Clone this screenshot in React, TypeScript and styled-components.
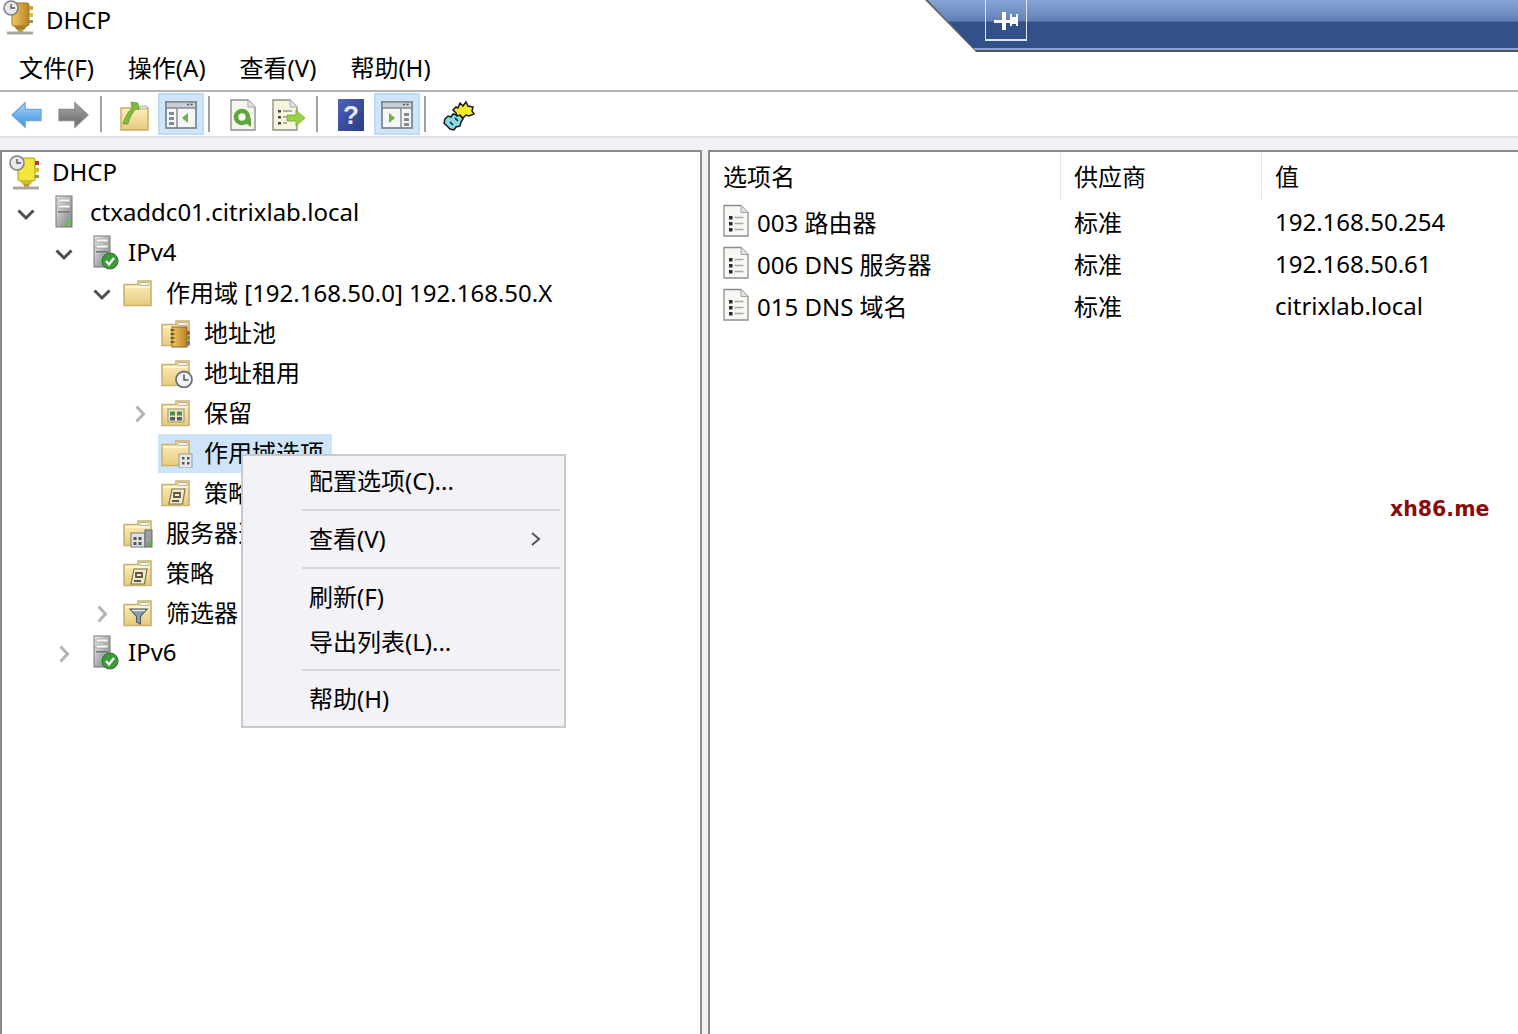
import React from 'react';
import styled, { createGlobalStyle } from 'styled-components';

const GlobalStyle = createGlobalStyle`
  html, body { margin: 0; padding: 0; background: #fff; }
  body {
    font-family: "Noto Sans", "Noto Sans CJK SC", sans-serif;
    font-size: 24px;
    color: #000;
    overflow: hidden;
  }
`;

/* ---------- icons ---------- */

const SharedDefs = () => (
  <svg width="0" height="0" style={{ position: 'absolute' }}>
    <defs>
      <linearGradient id="folderFill" x1="0" y1="0" x2="0" y2="1">
        <stop offset="0" stopColor="#fcf0bd" />
        <stop offset="1" stopColor="#e6cb80" />
      </linearGradient>
      <linearGradient id="goldFill" x1="0" y1="0" x2="1" y2="0">
        <stop offset="0" stopColor="#f0c860" />
        <stop offset="1" stopColor="#b98422" />
      </linearGradient>
      <linearGradient id="serverFill" x1="0" y1="0" x2="1" y2="1">
        <stop offset="0" stopColor="#f0f0f0" />
        <stop offset="1" stopColor="#777c80" />
      </linearGradient>
      <linearGradient id="arrowBlue" x1="0" y1="0" x2="0" y2="1">
        <stop offset="0" stopColor="#a8d4f8" />
        <stop offset="1" stopColor="#3c8edc" />
      </linearGradient>
      <linearGradient id="arrowGrey" x1="0" y1="0" x2="0" y2="1">
        <stop offset="0" stopColor="#a8a8a8" />
        <stop offset="1" stopColor="#666" />
      </linearGradient>
      <linearGradient id="helpFill" x1="0" y1="0" x2="1" y2="1">
        <stop offset="0" stopColor="#4b62bd" />
        <stop offset="1" stopColor="#2c3c80" />
      </linearGradient>
    </defs>
  </svg>
);

const Folder = ({ children }: { children?: React.ReactNode }) => (
  <svg width="32" height="30" viewBox="0 0 32 30">
    <path d="M1 27.500V6.500h14V3h13v24.500z" fill="url(#folderFill)" stroke="#cdb06c" strokeWidth="1.600" />
    <path d="M17 4.500h9v3h-9z" fill="#eef0ea" stroke="#b0ac92" strokeWidth=".8" />
    <path d="M2 9h25" stroke="#fff9dc" strokeWidth="1.600" />
    {children}
  </svg>
);

const BookBadge = () => (
  <g>
    <rect x="11" y="9" width="15" height="20" fill="url(#goldFill)" stroke="#8e6420" />
    <path d="M9.500 12h4M9.500 16h4M9.500 20h4M9.500 24h4" stroke="#5e4a22" strokeWidth="1.400" />
    <path d="M27.500 13v4" stroke="#a8433f" strokeWidth="2.400" />
    <path d="M27.500 18v4" stroke="#5a9a3a" strokeWidth="2.400" />
    <path d="M27.500 23v4" stroke="#3f77b8" strokeWidth="2.400" />
  </g>
);

const ClockBadge = () => (
  <g>
    <circle cx="23" cy="21.500" r="8" fill="#eef1f5" stroke="#6d7278" strokeWidth="1.800" />
    <path d="M23 16.500V22h4.500" fill="none" stroke="#555" strokeWidth="1.500" />
  </g>
);

const GridBadge = () => (
  <g>
    <rect x="7" y="11" width="16" height="13" fill="#e9e3c4" stroke="#9a9678" />
    <path d="M9 13.500h5v4H9zM16 13.500h5v4h-5z" fill="#4f8a4a" />
    <path d="M9 19h5v3.500H9zM16 19h5v3.500h-5z" fill="#5c5c5c" />
  </g>
);

const SheetBadge = () => (
  <g>
    <rect x="18" y="16" width="13" height="14" fill="#e8e8ec" stroke="#95979b" />
    <path d="M21 19h2.500v2.500H21zM26 19h2.500v2.500H26zM21 24h2.500v2.500H21zM26 24h2.500v2.500H26z" fill="#555" />
  </g>
);

const PolicyBadge = () => (
  <g>
    <path d="M11 11h13l-2.500 15H8z" fill="#f4ebc6" stroke="#7c7358" strokeWidth="1.200" />
    <path d="M13 15h6v4h-6zM11 23h7" fill="none" stroke="#5a5a4c" strokeWidth="1.800" />
  </g>
);

const FilterBadge = () => (
  <g>
    <path d="M7 11h17l-6.500 7.500V26l-4-2v-5.500z" fill="#8aa0a8" stroke="#4d5a60" strokeWidth="1.100" />
    <path d="M9 12.500h13" stroke="#e4eef0" strokeWidth="1.400" />
  </g>
);

const ServerBadge = () => (
  <g>
    <rect x="8" y="15" width="14" height="14" fill="#dfe0e2" stroke="#777" />
    <path d="M10.500 19h3v3h-3zM15.500 19h3v3h-3zM10.500 24h3v3h-3zM15.500 24h3v3h-3z" fill="#555" />
    <rect x="22" y="12" width="7" height="17" fill="#9aa0a4" stroke="#666" />
    <rect x="24" y="24" width="4" height="4" fill="#67b04a" />
  </g>
);

const ServerFrame = styled.div`
  margin-left: 8px;
  display: flex;
`;

const Server = ({ check }: { check?: boolean }) => (
  <ServerFrame>
    <svg width="26" height="36" viewBox="0 0 26 36">
      <rect x="1" y="1" width="16" height="31" fill="url(#serverFill)" stroke="#777" strokeWidth="1" />
      <rect x="3" y="4" width="12" height="3" fill="#f5f5f5" stroke="#8a8a8a" strokeWidth=".6" />
      <rect x="3" y="10" width="12" height="3" fill="#f5f5f5" stroke="#8a8a8a" strokeWidth=".6" />
      <rect x="3" y="16" width="12" height="1.600" fill="#777" />
      {check ? (
        <g>
          <circle cx="17" cy="26" r="8" fill="#3f9a3c" stroke="#2d6c2c" />
          <path d="M13 26l3 3.500 5-6.500" fill="none" stroke="#fff" strokeWidth="2.200" />
        </g>
      ) : (
        <rect x="10" y="25" width="6" height="6" fill="#79b565" />
      )}
    </svg>
  </ServerFrame>
);

const DhcpIcon = ({ bright }: { bright?: boolean }) => (
  <svg width="32" height="36" viewBox="0 0 32 36">
    <rect x="9" y="3" width="17" height="23" rx="2" fill={bright ? '#f2e63a' : 'url(#goldFill)'} stroke={bright ? '#a89a1c' : '#9a7424'} />
    <path d="M11 26h13l-3 4h-7z" fill={bright ? '#c8bc30' : '#a87e2a'} />
    <rect x="15" y="29" width="5" height="3" fill="#c09a3a" />
    <rect x="4" y="31.500" width="26" height="3" fill="#aaa79a" />
    <circle cx="8" cy="8" r="7" fill="#e7e9ec" stroke="#808488" strokeWidth="1.600" />
    <path d="M8 4v4h4" fill="none" stroke="#555" strokeWidth="1.300" />
    <rect x="26" y="6" width="4" height="4" fill={bright ? '#c8332f' : '#c9a24a'} />
    <rect x="26" y="13" width="4" height="4" fill="#d9b92f" />
    <rect x="26" y="20" width="4" height="3" fill="#7f9a5a" />
  </svg>
);

const DocList = () => (
  <svg width="28" height="34" viewBox="0 0 28 34">
    <path d="M2 1.500h17l7 7V32H2z" fill="#f7f7f3" stroke="#8d8d8d" strokeWidth="1.300" />
    <path d="M19 1.500v7h7" fill="#e3e3e3" stroke="#a0a0a0" />
    <path d="M7 12h3.500v3.500H7zM7 18h3.500v3.500H7zM7 24h3.500v3.500H7z" fill="#2c2c2c" />
    <path d="M12.500 13.500h9M12.500 19.500h9M12.500 25.500h9" stroke="#a7a7a7" strokeWidth="1.600" />
  </svg>
);

const Chevron = ({ open }: { open?: boolean }) => (
  <svg width="20" height="20" viewBox="0 0 20 20">
    {open ? (
      <path d="M2.500 6.500l7.500 7.500 7.500-7.500" fill="none" stroke="#4e4e4e" strokeWidth="3" />
    ) : (
      <path d="M6.500 2.500l7 7.500-7 7.500" fill="none" stroke="#b4b4b4" strokeWidth="3" />
    )}
  </svg>
);

const ArrowLeft = () => (
  <svg width="32" height="28" viewBox="0 0 34 30">
    <path d="M1 15L15 2v7h17v12H15v7z" fill="url(#arrowBlue)" stroke="#6ba6de" strokeWidth="1.400" />
  </svg>
);

const ArrowRight = () => (
  <svg width="32" height="28" viewBox="0 0 34 30">
    <path d="M33 15L19 2v7H2v12h17v7z" fill="url(#arrowGrey)" stroke="#8c8c8c" strokeWidth="1.400" />
  </svg>
);

const UpFolder = () => (
  <svg width="30" height="32" viewBox="0 0 30 32">
    <path d="M1 31V9h27v22z" fill="url(#folderFill)" stroke="#c9aa62" strokeWidth="1.400" />
    <path d="M20 7h7v3h-7z" fill="#e2e3d8" stroke="#a0a090" strokeWidth=".7" />
    <path d="M3 25C5 17 9 12 12 9l-1-6 7 1 1 7-3-1c-3 3-7 9-8 15z" fill="#80b83a" stroke="#6a9c30" strokeWidth=".8" />
  </svg>
);

const PaneIcon = ({ flip }: { flip?: boolean }) => (
  <svg width="32" height="28" viewBox="0 0 32 28">
    <rect x="1" y="1" width="30" height="26" fill="#f4f6f8" stroke="#7e8890" strokeWidth="1.800" />
    <rect x="1" y="1" width="30" height="6" fill="#c7ced4" stroke="#7e8890" strokeWidth="1.400" />
    <path d="M22 3.500h2M25.500 3.500h2" stroke="#556" strokeWidth="1.400" />
    {flip ? (
      <g>
        <path d="M8 12l6 5-6 5z" fill="#6fb23c" />
        <path d="M20 7v20" stroke="#7e8890" strokeWidth="1.400" />
        <path d="M23 12h5v3h-5zM23 17h5v3h-5zM23 22h5v3h-5z" fill="#838b92" />
      </g>
    ) : (
      <g>
        <path d="M4 11h5v3H4zM4 16h5v3H4zM4 21h5v3H4z" fill="#838b92" />
        <path d="M12 7v20" stroke="#7e8890" strokeWidth="1.400" />
        <path d="M23 12l-6 5 6 5z" fill="#6fb23c" />
      </g>
    )}
  </svg>
);

const RefreshDoc = () => (
  <svg width="26" height="32" viewBox="0 0 26 32">
    <path d="M1 1h17l7 7v23H1z" fill="#f6f6f0" stroke="#8f8f8f" strokeWidth="1.400" />
    <path d="M18 1v7h7" fill="#e4e4e4" stroke="#aaa" />
    <circle cx="12" cy="18" r="6" fill="none" stroke="#5fa53c" strokeWidth="4.600" />
    <path d="M13 22l8 6v-9z" fill="#5fa53c" />
  </svg>
);

const ExportDoc = () => (
  <svg width="34" height="32" viewBox="0 0 34 32">
    <path d="M1 1h17l7 7v23H1z" fill="#f7f4e0" stroke="#8f8f8f" strokeWidth="1.400" />
    <path d="M18 1v7h7" fill="#e4e4e4" stroke="#aaa" />
    <path d="M6 11h3v2.500H6zM6 17h3v2.500H6zM6 23h3v2.500H6z" fill="#444" />
    <path d="M11 12h9M11 18h4M11 24h4" stroke="#999" strokeWidth="1.500" />
    <path d="M15 16h9v-5l9 8-9 8v-5h-9z" fill="#9ad04a" stroke="#76a83a" strokeWidth=".8" />
  </svg>
);

const HelpBook = () => (
  <svg width="26" height="32" viewBox="0 0 26 32">
    <rect width="26" height="32" fill="url(#helpFill)" />
    <text x="13" y="25" fontFamily="Liberation Sans, sans-serif" fontWeight="700" fontSize="26" fill="#e6e9f6" textAnchor="middle">?</text>
  </svg>
);

const SnapIn = () => (
  <svg width="34" height="32" viewBox="0 0 34 32">
    <path d="M3 20l3-3 3 1 2-3 3 1 2-2 3 3 2 3-2 3-1 4-4 1-2 3-4-1-3-3-3-3z" fill="#86dbe4" stroke="#1a1a1a" strokeWidth="1.500" />
    <path d="M11 11l3-3 2 1 2-5 3 3 3-4 2 4 5 1-1 4 2 3-5 2-3-1-3 3-3-3-3 1-1-3z" fill="#f6ea2e" stroke="#1a1a1a" strokeWidth="1.500" />
    <path d="M8 23l3 3M13 19l3 3" stroke="#1a1a1a" strokeWidth="1.500" />
  </svg>
);

const PinGlyph = () => (
  <svg width="24" height="18" viewBox="0 0 24 18">
    <path d="M0 8h16v3H0zM8 0h4v18H8z" fill="#fff" />
    <path d="M16 2h2v12h-2zM22 2h2v12h-2zM18 5h4v7h-4z" fill="#fff" />
  </svg>
);

/* ---------- page ---------- */

const Page = styled.div`
  position: relative;
  width: 1518px;
  height: 1034px;
  overflow: hidden;
  display: flex;
  flex-direction: column;
  background: #fff;
`;

const TitleBar = styled.div`
  height: 45px;
  flex: none;
  display: flex;
  align-items: flex-start;
`;

const AppIconBox = styled.div`
  width: 46px;
  height: 36px;
  flex: none;
  padding-left: 3px;
  box-sizing: border-box;
`;

const TitleText = styled.div`
  flex: 1;
  line-height: 40px;
`;

const Ribbon = styled.div`
  width: 593px;
  height: 52px;
  flex: none;
  box-sizing: border-box;
  padding-left: 60px;
  background: #666;
  clip-path: polygon(0 0, 100% 0, 100% 100%, 51px 100%);
  position: relative;
  z-index: 1;
  &::before {
    content: '';
    position: absolute;
    inset: 0 0 0 3px;
    background: linear-gradient(#8aa6d8 0, #5f7fb5 21px, #345089 22px, #345089 48px, #8aa6d8 48px, #8aa6d8 50px, #555 50px);
    clip-path: polygon(0 0, 100% 0, 100% 100%, 49px 100%);
  }
`;

const PinBox = styled.div`
  position: relative;
  width: 42px;
  height: 41px;
  box-sizing: border-box;
  border: solid #dfe6f2;
  border-width: 0 1px 2px 1px;
  display: flex;
  align-items: center;
  justify-content: center;
  padding-top: 3px;
`;

const MenuBar = styled.div`
  height: 47px;
  flex: none;
  box-sizing: border-box;
  display: flex;
  align-items: center;
  padding: 0 0 2px 19px;
  gap: 34px;
  border-bottom: 2px solid #b2b2b2;
`;

const Toolbar = styled.div`
  height: 44px;
  flex: none;
  display: flex;
  align-items: center;
  padding-left: 4px;
  border-bottom: 2px solid #e2e2e2;
`;

const ToolButton = styled.div<{ $active?: boolean }>`
  width: 46px;
  height: 42px;
  box-sizing: border-box;
  display: flex;
  align-items: center;
  justify-content: center;
  padding-top: 2px;
  background: ${(p) => (p.$active ? '#cfe5f9' : 'transparent')};
  border: 2px solid ${(p) => (p.$active ? '#bcdcf7' : 'transparent')};
`;

const ToolSep = styled.div`
  width: 2px;
  height: 36px;
  margin: 0 10px 0 4px;
  background: #a2a2a2;
`;

const Panes = styled.div`
  flex: 1;
  display: flex;
  gap: 6px;
  padding-top: 12px;
  background: #f3f1f5;
  min-height: 0;
`;

const TreePane = styled.div`
  width: 702px;
  flex: none;
  box-sizing: border-box;
  background: #fff;
  border: solid #8a8a8a;
  border-width: 2px 2px 0 2px;
  padding-top: 1px;
`;

const ListPane = styled.div`
  flex: 1;
  background: #fff;
  border: solid #8a8a8a;
  border-width: 2px 0 0 2px;
`;

const TreeRow = styled.div<{ $level: number }>`
  height: 40px;
  display: flex;
  align-items: center;
  padding-left: ${(p) => (p.$level === 0 ? 4 : (p.$level - 1) * 38 + 4)}px;
  white-space: nowrap;
`;

const ChevronSlot = styled.div`
  width: 38px;
  flex: none;
  box-sizing: border-box;
  display: flex;
  justify-content: center;
  padding: 2px 0 0 2px;
`;

const NodeLabel = styled.div<{ $selected?: boolean }>`
  display: flex;
  align-items: center;
  height: 39px;
  padding-right: ${(p) => (p.$selected ? 8 : 0)}px;
  background: ${(p) => (p.$selected ? '#cde4f9' : 'transparent')};
`;

const NodeText = styled.span`
  margin-bottom: 3px;
`;

const IconSlot = styled.div`
  width: 46px;
  flex: none;
  display: flex;
  padding-left: 3px;
  box-sizing: border-box;
  align-items: center;
`;

const ColumnHeader = styled.div`
  height: 48px;
  display: grid;
  grid-template-columns: 351px 201px 1fr;
`;

const HeaderCell = styled.div`
  display: flex;
  align-items: center;
  padding: 0 0 2px 13px;
  border-right: 1px solid #e6e6e6;
  &:last-child { border-right: none; }
`;

const ListRow = styled.div`
  height: 42px;
  display: grid;
  grid-template-columns: 351px 201px 1fr;
  align-items: center;
`;

const NameCell = styled.div`
  display: flex;
  align-items: center;
  padding-left: 12px;
  gap: 7px;
  white-space: pre;
`;

const ValueCell = styled.div`
  padding-left: 13px;
`;

const ContextMenu = styled.div`
  position: absolute;
  left: 241px;
  top: 454px;
  width: 325px;
  height: 274px;
  box-sizing: border-box;
  background: #f3f2f6;
  border: 2px solid #c9c9cb;
  padding-top: 2px;
  z-index: 2;
`;

const MenuItem = styled.div<{ $short?: boolean }>`
  height: ${(p) => (p.$short ? 44 : 46)}px;
  box-sizing: border-box;
  display: flex;
  align-items: center;
  justify-content: space-between;
  padding: 0 22px 4px 66px;
  white-space: nowrap;
`;

const SubmenuArrow = styled.svg`
  margin-top: 4px;
`;

const MenuSep = styled.div`
  height: 2px;
  margin: 5px 4px 5px 59px;
  background: #d9d9db;
`;

const Watermark = styled.div`
  position: absolute;
  left: 1390px;
  top: 497px;
  font-family: "DejaVu Sans", sans-serif;
  font-size: 20.500px;
  font-weight: 700;
  color: #8a0a0a;
`;

type Node = {
  level: number;
  label: string;
  icon: React.ReactNode;
  open?: boolean;
  closed?: boolean;
  selected?: boolean;
};

const nodes: Node[] = [
  { level: 0, label: 'DHCP', icon: <DhcpIcon bright /> },
  { level: 1, label: 'ctxaddc01.citrixlab.local', icon: <Server />, open: true },
  { level: 2, label: 'IPv4', icon: <Server check />, open: true },
  { level: 3, label: '作用域 [192.168.50.0] 192.168.50.X', icon: <Folder />, open: true },
  { level: 4, label: '地址池', icon: <Folder><BookBadge /></Folder> },
  { level: 4, label: '地址租用', icon: <Folder><ClockBadge /></Folder> },
  { level: 4, label: '保留', icon: <Folder><GridBadge /></Folder>, closed: true },
  { level: 4, label: '作用域选项', icon: <Folder><SheetBadge /></Folder>, selected: true },
  { level: 4, label: '策略', icon: <Folder><PolicyBadge /></Folder> },
  { level: 3, label: '服务器选项', icon: <Folder><ServerBadge /></Folder> },
  { level: 3, label: '策略', icon: <Folder><PolicyBadge /></Folder> },
  { level: 3, label: '筛选器', icon: <Folder><FilterBadge /></Folder>, closed: true },
  { level: 2, label: 'IPv6', icon: <Server check />, closed: true },
];

const options = [
  { name: '003 路由器', vendor: '标准', value: '192.168.50.254' },
  { name: '006 DNS 服务器', vendor: '标准', value: '192.168.50.61' },
  { name: '015 DNS 域名', vendor: '标准', value: 'citrixlab.local' },
];

const App = () => {
  return (
    <Page>
      <GlobalStyle />
      <SharedDefs />
      <TitleBar>
        <AppIconBox>
          <DhcpIcon />
        </AppIconBox>
        <TitleText>DHCP</TitleText>
        <Ribbon>
          <PinBox>
            <PinGlyph />
          </PinBox>
        </Ribbon>
      </TitleBar>
      <MenuBar>
        <span>文件(F)</span>
        <span>操作(A)</span>
        <span>查看(V)</span>
        <span>帮助(H)</span>
      </MenuBar>
      <Toolbar>
        <ToolButton><ArrowLeft /></ToolButton>
        <ToolButton><ArrowRight /></ToolButton>
        <ToolSep />
        <ToolButton><UpFolder /></ToolButton>
        <ToolButton $active><PaneIcon /></ToolButton>
        <ToolSep />
        <ToolButton><RefreshDoc /></ToolButton>
        <ToolButton><ExportDoc /></ToolButton>
        <ToolSep />
        <ToolButton><HelpBook /></ToolButton>
        <ToolButton $active><PaneIcon flip /></ToolButton>
        <ToolSep />
        <ToolButton><SnapIn /></ToolButton>
      </Toolbar>
      <Panes>
        <TreePane>
          {nodes.map((n) => (
            <TreeRow key={n.level + n.label} $level={n.level}>
              {n.level > 0 && (
                <ChevronSlot>
                  {n.open && <Chevron open />}
                  {n.closed && <Chevron />}
                </ChevronSlot>
              )}
              <NodeLabel $selected={n.selected}>
                <IconSlot>{n.icon}</IconSlot>
                <NodeText>{n.label}</NodeText>
              </NodeLabel>
            </TreeRow>
          ))}
        </TreePane>
        <ListPane>
          <ColumnHeader>
            <HeaderCell>选项名</HeaderCell>
            <HeaderCell>供应商</HeaderCell>
            <HeaderCell>值</HeaderCell>
          </ColumnHeader>
          {options.map((o) => (
            <ListRow key={o.name}>
              <NameCell><DocList />{o.name}</NameCell>
              <ValueCell>{o.vendor}</ValueCell>
              <ValueCell>{o.value}</ValueCell>
            </ListRow>
          ))}
        </ListPane>
      </Panes>
      <ContextMenu>
        <MenuItem>配置选项(C)...</MenuItem>
        <MenuSep />
        <MenuItem>
          查看(V)
          <SubmenuArrow width="12" height="16" viewBox="0 0 12 16">
            <path d="M2 2l7 6-7 6" fill="none" stroke="#555" strokeWidth="2" />
          </SubmenuArrow>
        </MenuItem>
        <MenuSep />
        <MenuItem>刷新(F)</MenuItem>
        <MenuItem $short>导出列表(L)...</MenuItem>
        <MenuSep />
        <MenuItem>帮助(H)</MenuItem>
      </ContextMenu>
      <Watermark>xh86.me</Watermark>
    </Page>
  );
};

export default App;
